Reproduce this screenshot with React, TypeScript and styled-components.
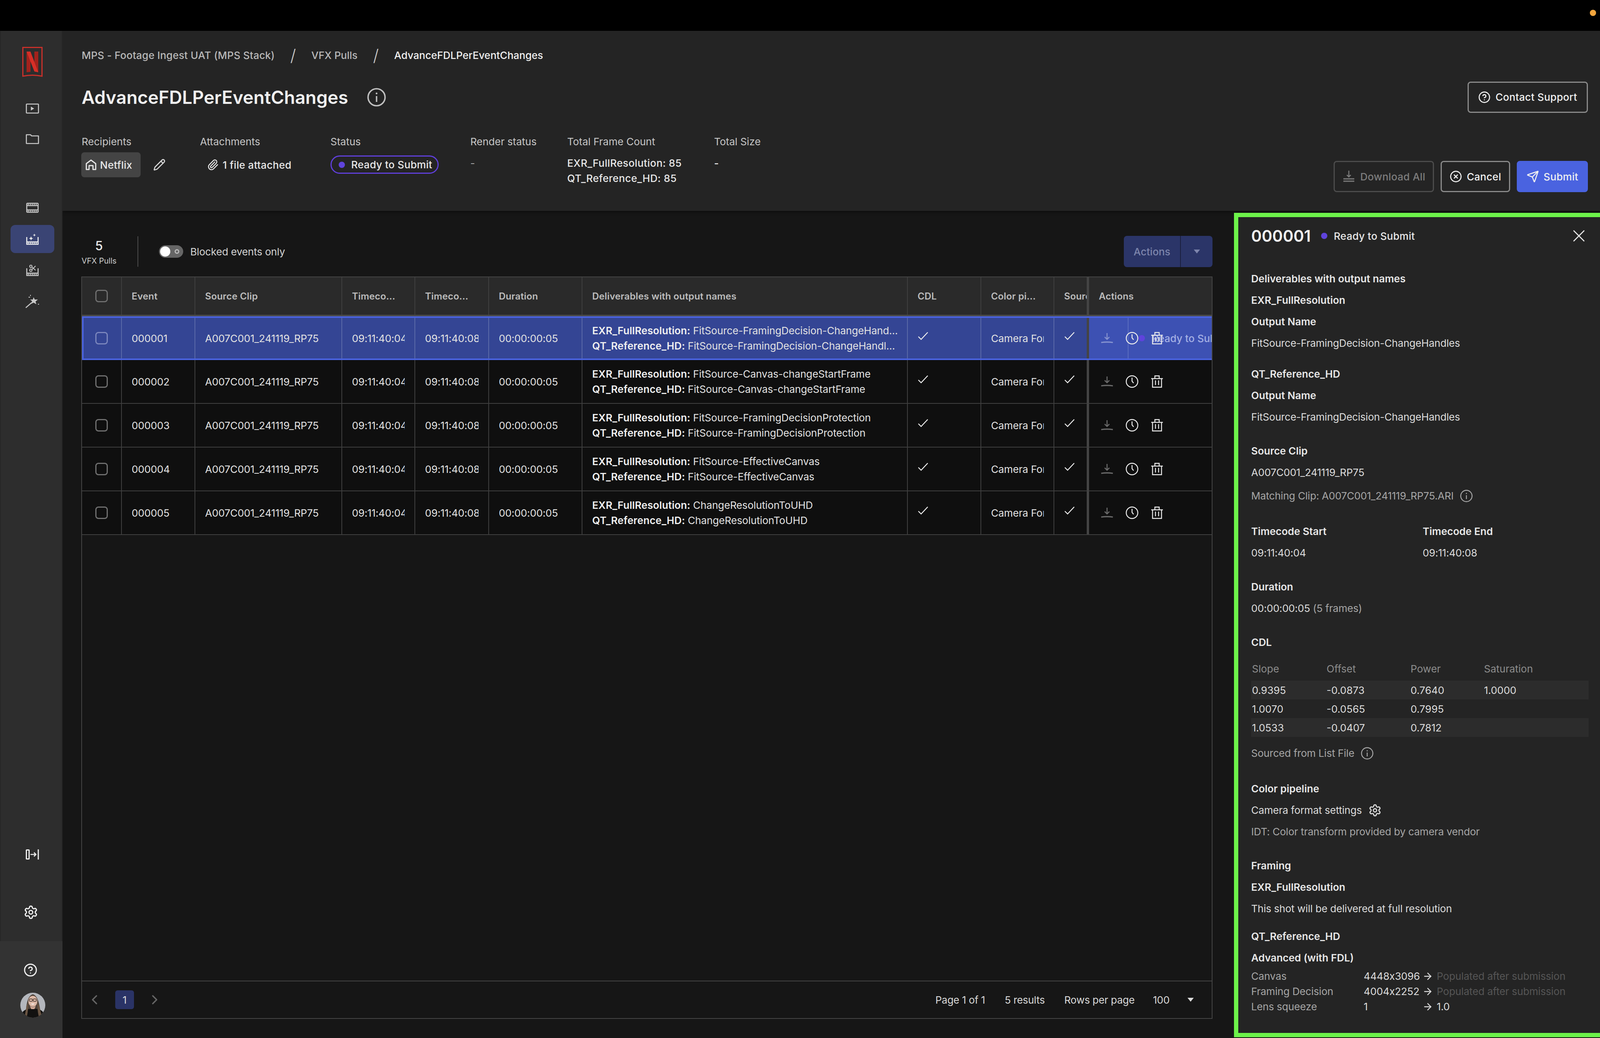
import styled, { createGlobalStyle } from 'styled-components';
import { ArrowRight, ChevronLeft, ChevronRight, CircleHelp, CircleX, Paperclip, Pencil, Send, Settings, X } from 'lucide-react';

const GlobalStyle = createGlobalStyle`
  * { box-sizing: border-box; }
  html, body { margin: 0; padding: 0; background: #000; }
  body {
    font-family: Inter, "Noto Sans", "Liberation Sans", sans-serif;
    font-size: 26px;
    color: #e6e6e6;
  }
`;

const COLUMNS = '102px 188px 376px 187px 189px 239px 833px 188px 187px 83px 320px';

const rows = [
  { id: '000001', exr: 'FitSource-FramingDecision-ChangeHandles', qt: 'FitSource-FramingDecision-ChangeHandles', selected: true },
  { id: '000002', exr: 'FitSource-Canvas-changeStartFrame', qt: 'FitSource-Canvas-changeStartFrame' },
  { id: '000003', exr: 'FitSource-FramingDecisionProtection', qt: 'FitSource-FramingDecisionProtection' },
  { id: '000004', exr: 'FitSource-EffectiveCanvas', qt: 'FitSource-EffectiveCanvas' },
  { id: '000005', exr: 'ChangeResolutionToUHD', qt: 'ChangeResolutionToUHD' },
];

function NetflixLogo() {
  return (
    <svg width="52" height="77" viewBox="0 0 52 77">
      <path d="M1.5 1.5H50.5V75C34 71.500 18 71.500 1.500 75Z" fill="none" stroke="#c8302a" strokeWidth="3" />
      <path d="M11 12H21V64L11 65Z" fill="#a3221c" />
      <path d="M31 12H41V65L31 63Z" fill="#a3221c" />
      <path d="M11 12H21L41 65L31 63Z" fill="#d62f27" />
    </svg>
  );
}

function PlayIcon() {
  return (
    <svg width="34" height="26" viewBox="0 0 34 26" fill="none" stroke="currentColor" strokeWidth="2.600">
      <rect x="1.500" y="1.500" width="31" height="23" rx="1.500" />
      <path d="M13 8L21.500 13L13 18Z" fill="currentColor" stroke="none" />
    </svg>
  );
}

function FolderIcon() {
  return (
    <svg width="34" height="26" viewBox="0 0 34 26" fill="none" stroke="currentColor" strokeWidth="2.600">
      <path d="M1.500 24V2H12L15 5H32.500V24.500H2Z" strokeLinejoin="round" />
    </svg>
  );
}

function FilmIcon() {
  return (
    <svg width="32" height="26" viewBox="0 0 32 26" fill="none" stroke="currentColor" strokeWidth="2.600">
      <rect x="1.500" y="1.500" width="29" height="23" rx="2" />
      <path d="M2 7.500H30M2 18.500H30" />
      <path d="M4 4.500H28M4 21.500H28" strokeWidth="2.500" strokeDasharray="3 2" />
    </svg>
  );
}

function ClapperSparkIcon() {
  return (
    <svg width="32" height="30" viewBox="0 0 32 30" fill="none" stroke="currentColor" strokeWidth="2.600">
      <path d="M1.500 10V28.500H30.500V10" />
      <path d="M2 22.500H30" />
      <path d="M4 25.500H28" strokeWidth="2.500" strokeDasharray="3 2" />
      <path d="M12.500 8L14 12L18 13.500L14 15L12.500 19L11 15L7 13.500L11 12Z" fill="currentColor" stroke="none" />
      <path d="M21 1L22 4L25 5L22 6L21 9L20 6L17 5L20 4Z" fill="currentColor" stroke="none" />
    </svg>
  );
}

function ClapperCutIcon() {
  return (
    <svg width="32" height="30" viewBox="0 0 32 30" fill="none" stroke="currentColor" strokeWidth="2.600">
      <path d="M1.500 10V28.500H30.500V10" />
      <path d="M2 22.500H30" />
      <path d="M4 25.500H28" strokeWidth="2.500" strokeDasharray="3 2" />
      <circle cx="12" cy="5" r="3" strokeWidth="2" />
      <circle cx="12" cy="15" r="3" strokeWidth="2" />
      <path d="M14.500 6.500L24 15M14.500 13.500L24 4" strokeWidth="2" />
    </svg>
  );
}

function WandIcon() {
  return (
    <svg width="36" height="36" viewBox="0 0 36 36" fill="currentColor">
      <path d="M1 34L16 21" fill="none" stroke="currentColor" strokeWidth="2.600" />
      <path d="M21 7L24 13L32 13L26 18L28 25L21 21L15 24L17 17L12 13L19 13Z" />
      <rect x="8" y="6" width="4" height="2" />
      <rect x="12" y="1" width="2" height="3" />
      <rect x="32" y="24" width="3" height="2" />
    </svg>
  );
}

function CollapseIcon() {
  return (
    <svg width="34" height="26" viewBox="0 0 34 26" fill="none" stroke="currentColor" strokeWidth="3">
      <rect x="1.500" y="1.500" width="7" height="23" rx="1" />
      <path d="M32 0V26" />
      <path d="M12 13H26M21 8L26 13L21 18" strokeWidth="2.600" />
    </svg>
  );
}

function InfoIcon({ size = 32 }: { size?: number }) {
  return (
    <svg width={size} height={size} viewBox="0 0 32 32" fill="none" stroke="currentColor" strokeWidth="2.400">
      <circle cx="16" cy="16" r="14.500" />
      <path d="M16 14V24" />
      <circle cx="16" cy="9.500" r="1.500" fill="currentColor" stroke="none" />
    </svg>
  );
}

function HouseIcon() {
  return (
    <svg width="30" height="30" viewBox="0 0 30 30" fill="none" stroke="currentColor" strokeWidth="3" strokeLinejoin="round">
      <path d="M3 27V12L15 3L27 12V27H20V17H10V27Z" />
    </svg>
  );
}

function DownloadIcon() {
  return (
    <svg width="32" height="28" viewBox="0 0 32 28" fill="none" stroke="currentColor" strokeWidth="2.600">
      <path d="M16 1V16M10 11L16 17L22 11" />
      <path d="M1 25C11 23.500 21 23.500 31 25" strokeWidth="3" />
    </svg>
  );
}

function DownloadAllIcon() {
  return (
    <svg width="34" height="34" viewBox="0 0 34 34" fill="none" stroke="currentColor" strokeWidth="2.600">
      <path d="M17 2V17M12 13L17 18L22 13" />
      <path d="M3 23H31M3 29H31" strokeWidth="2.800" />
    </svg>
  );
}

function ClockIcon() {
  return (
    <svg width="32" height="32" viewBox="0 0 32 32" fill="none" stroke="currentColor" strokeWidth="2.400">
      <circle cx="16" cy="16" r="14.800" />
      <path d="M16 6V15L20 20" />
    </svg>
  );
}

function TrashIcon() {
  return (
    <svg width="32" height="32" viewBox="0 0 32 32" fill="none" stroke="currentColor" strokeWidth="2.400">
      <path d="M1 8.500H31" />
      <path d="M10.500 8V1.500H21.500V8" />
      <path d="M4.500 9V30.500H27.500V9" />
      <path d="M12 13V25M20 13V25" />
    </svg>
  );
}

function CheckIcon() {
  return (
    <svg width="28" height="24" viewBox="0 0 28 24" fill="none" stroke="currentColor" strokeWidth="2.400">
      <path d="M2 13L9 20L26 2" />
    </svg>
  );
}

function Caret({ color = '#ddd' }: { color?: string }) {
  return (
    <svg width="16" height="10" viewBox="0 0 16 10">
      <path d="M0 0H16L8 10Z" fill={color} />
    </svg>
  );
}

function Avatar() {
  return (
    <svg width="64" height="64" viewBox="0 0 64 64">
      <defs>
        <clipPath id="avatar-clip">
          <circle cx="32" cy="32" r="32" />
        </clipPath>
      </defs>
      <g clipPath="url(#avatar-clip)">
        <rect width="64" height="64" fill="#b4b7bd" />
        <path d="M14 64C14 40 16 8 32 4C48 8 50 40 54 64Z" fill="#4c4038" />
        <path d="M0 64C4 44 16 40 32 42C48 40 60 44 64 64Z" fill="#121110" />
        <path d="M17 60C20 48 20 36 21 24L16 34L12 56ZM47 60C44 48 44 36 43 24L48 34L54 56Z" fill="#6a5543" />
        <ellipse cx="32" cy="22" rx="11.500" ry="14" fill="#dcb8a6" />
        <path d="M24 33C28 38 36 38 40 33L36 42H28Z" fill="#d0a794" />
        <rect x="23" y="16" width="8" height="6" rx="2" fill="none" stroke="#3a2c26" strokeWidth="1.400" />
        <rect x="33" y="16" width="8" height="6" rx="2" fill="none" stroke="#3a2c26" strokeWidth="1.400" />
        <path d="M27 28C30 31 34 31 37 28Z" fill="#fff" />
      </g>
    </svg>
  );
}

function App() {
  return (
    <>
      <GlobalStyle />
      <Page>
        <TopBar>
          <StatusDot />
        </TopBar>
        <Body>
          <Sidebar>
            <SideTop>
              <LogoBox>
                <NetflixLogo />
              </LogoBox>
              <NavGroup $top={45} $gap={6}>
                <NavItem><PlayIcon /></NavItem>
                <NavItem><FolderIcon /></NavItem>
              </NavGroup>
              <NavGroup $top={104} $gap={8}>
                <NavItem><FilmIcon /></NavItem>
                <NavItem $active><ClapperSparkIcon /></NavItem>
                <NavItem><ClapperCutIcon /></NavItem>
                <NavItem><WandIcon /></NavItem>
              </NavGroup>
              <SideBottomTools>
                <NavItem $bright><CollapseIcon /></NavItem>
                <NavItem $bright $shift={-4}><Settings size={38} strokeWidth={1.900} /></NavItem>
              </SideBottomTools>
            </SideTop>
            <SideFoot>
              <NavItem $bright $shift={-4}><CircleHelp size={36} strokeWidth={2} /></NavItem>
              <AvatarBox><Avatar /></AvatarBox>
            </SideFoot>
          </Sidebar>

          <Main>
            <Header>
              <Breadcrumb>
                <CrumbRoot>MPS - Footage Ingest UAT (MPS Stack)</CrumbRoot>
                <Slash>/</Slash>
                <span>VFX Pulls</span>
                <Slash>/</Slash>
                <CrumbCurrent>AdvanceFDLPerEventChanges</CrumbCurrent>
              </Breadcrumb>
              <TitleRow>
                <TitleGroup>
                  <Title>AdvanceFDLPerEventChanges</Title>
                  <TitleInfo><InfoIcon size={48} /></TitleInfo>
                </TitleGroup>
                <Button $width={308}>
                  <CircleHelp size={32} strokeWidth={2} />
                  Contact Support
                </Button>
              </TitleRow>
              <MetaRow>
                <MetaGrid>
                  <MetaCol>
                    <MetaLabel>Recipients</MetaLabel>
                    <ChipRow>
                      <Chip>
                        <HouseIcon />
                        Netflix
                      </Chip>
                      <Pencil size={32} strokeWidth={2} />
                    </ChipRow>
                  </MetaCol>
                  <MetaCol>
                    <MetaLabel>Attachments</MetaLabel>
                    <AttachRow>
                      <Paperclip size={30} strokeWidth={2} />
                      1 file attached
                    </AttachRow>
                  </MetaCol>
                  <MetaCol>
                    <MetaLabel>Status</MetaLabel>
                    <StatusPill>
                      <PurpleDot />
                      Ready to Submit
                    </StatusPill>
                  </MetaCol>
                  <MetaCol>
                    <MetaLabel>Render status</MetaLabel>
                    <MetaDash>-</MetaDash>
                  </MetaCol>
                  <MetaCol>
                    <MetaLabel>Total Frame Count</MetaLabel>
                    <MetaValue>EXR_FullResolution: 85</MetaValue>
                    <MetaValue>QT_Reference_HD: 85</MetaValue>
                  </MetaCol>
                  <MetaCol>
                    <MetaLabel>Total Size</MetaLabel>
                    <MetaValue>-</MetaValue>
                  </MetaCol>
                </MetaGrid>
                <ButtonRow>
                  <Button $width={257} $disabled>
                    <DownloadAllIcon />
                    Download All
                  </Button>
                  <Button $width={178}>
                    <CircleX size={32} strokeWidth={2} />
                    Cancel
                  </Button>
                  <Button $width={182} $primary>
                    <Send size={32} strokeWidth={2} />
                    Submit
                  </Button>
                </ButtonRow>
              </MetaRow>
            </Header>

            <Content>
              <ListArea>
                <Toolbar>
                  <ToolbarLeft>
                    <CountBlock>
                      <CountValue>5</CountValue>
                      <CountLabel>VFX Pulls</CountLabel>
                    </CountBlock>
                    <ToolbarDivider />
                    <Toggle>
                      <ToggleKnob />
                      <ToggleRing />
                    </Toggle>
                    <ToggleLabel>Blocked events only</ToggleLabel>
                  </ToolbarLeft>
                  <SplitButton>
                    <SplitMain>Actions</SplitMain>
                    <SplitCaret><Caret color="#7d85ac" /></SplitCaret>
                  </SplitButton>
                </Toolbar>

                <Table>
                  <HeadRow>
                    <HeadCell $center><CheckBox /></HeadCell>
                    <HeadCell>Event</HeadCell>
                    <HeadCell>Source Clip</HeadCell>
                    <HeadCell>Timeco...</HeadCell>
                    <HeadCell>Timeco...</HeadCell>
                    <HeadCell>Duration</HeadCell>
                    <HeadCell>Deliverables with output names</HeadCell>
                    <HeadCell>CDL</HeadCell>
                    <HeadCell>Color pi...</HeadCell>
                    <HeadCell $clip>Source</HeadCell>
                    <ActionsHead>Actions</ActionsHead>
                  </HeadRow>
                  {rows.map((row) => (
                    <Row key={row.id} $selected={row.selected}>
                      <Cell $center $first={row.selected} $selected={row.selected}><CheckBox $dim={row.selected} /></Cell>
                      <Cell $selected={row.selected}><Clip>{row.id}</Clip></Cell>
                      <Cell $selected={row.selected}><Clip>A007C001_241119_RP75</Clip></Cell>
                      <Cell $selected={row.selected}><Clip>09:11:40:04</Clip></Cell>
                      <Cell $selected={row.selected}><Clip>09:11:40:08</Clip></Cell>
                      <Cell $selected={row.selected}><Clip>00:00:00:05</Clip></Cell>
                      <Cell $selected={row.selected}>
                        <Deliverables>
                          <DeliverableLine><b>EXR_FullResolution:</b> {row.exr}</DeliverableLine>
                          <DeliverableLine><b>QT_Reference_HD:</b> {row.qt}</DeliverableLine>
                        </Deliverables>
                      </Cell>
                      <Cell $selected={row.selected}><CheckWrap><CheckIcon /></CheckWrap></Cell>
                      <Cell $selected={row.selected}><Clip>Camera Format</Clip></Cell>
                      <Cell $selected={row.selected} $noLine><CheckWrap><CheckIcon /></CheckWrap></Cell>
                      <ActionsCell $selected={row.selected}>
                        <ActionIcon $dim><DownloadIcon /></ActionIcon>
                        <ActionIcon><ClockIcon /></ActionIcon>
                        <ActionIcon><TrashIcon /></ActionIcon>
                        {row.selected ? (
                          <RowStatus>
                            <PurpleDot />
                            Ready to Submit
                          </RowStatus>
                        ) : null}
                      </ActionsCell>
                    </Row>
                  ))}
                  <TableFill />
                  <TableFoot>
                    <Pager>
                      <PagerArrow><ChevronLeft size={40} strokeWidth={2} /></PagerArrow>
                      <PageNumber>1</PageNumber>
                      <PagerArrow><ChevronRight size={40} strokeWidth={2} /></PagerArrow>
                    </Pager>
                    <FootInfo>
                      <span>Page 1 of 1</span>
                      <span>5 results</span>
                      <span>Rows per page</span>
                      <RowsValue>100</RowsValue>
                      <Caret />
                    </FootInfo>
                  </TableFoot>
                </Table>
              </ListArea>

              <DetailPanel>
                <PanelHead>
                  <PanelId>000001</PanelId>
                  <PanelStatus>
                    <PurpleDot />
                    Ready to Submit
                  </PanelStatus>
                  <CloseBtn><X size={52} strokeWidth={1.200} /></CloseBtn>
                </PanelHead>

                <Heading>Deliverables with output names</Heading>
                <Heading>EXR_FullResolution</Heading>
                <Heading>Output Name</Heading>
                <Line>FitSource-FramingDecision-ChangeHandles</Line>

                <Heading $top={24}>QT_Reference_HD</Heading>
                <Heading>Output Name</Heading>
                <Line>FitSource-FramingDecision-ChangeHandles</Line>

                <Heading $top={32}>Source Clip</Heading>
                <Line>A007C001_241119_RP75</Line>
                <Line $top={5} $muted>
                  Matching Clip: A007C001_241119_RP75.ARI
                  <InlineIcon><InfoIcon /></InlineIcon>
                </Line>

                <TimecodeGrid>
                  <div>
                    <Heading>Timecode Start</Heading>
                    <Line>09:11:40:04</Line>
                  </div>
                  <div>
                    <Heading>Timecode End</Heading>
                    <Line>09:11:40:08</Line>
                  </div>
                </TimecodeGrid>

                <Heading $top={32}>Duration</Heading>
                <Line>00:00:00:05 <Frames>(5 frames)</Frames></Line>

                <Heading $top={32}>CDL</Heading>
                <CdlHead>
                  <span>Slope</span>
                  <span>Offset</span>
                  <span>Power</span>
                  <span>Saturation</span>
                </CdlHead>
                <CdlRow $band>
                  <span>0.9395</span>
                  <span>-0.0873</span>
                  <span>0.7640</span>
                  <span>1.0000</span>
                </CdlRow>
                <CdlRow>
                  <span>1.0070</span>
                  <span>-0.0565</span>
                  <span>0.7995</span>
                </CdlRow>
                <CdlRow $band>
                  <span>1.0533</span>
                  <span>-0.0407</span>
                  <span>0.7812</span>
                </CdlRow>
                <Line $top={14} $muted>
                  Sourced from List File
                  <InlineIcon><InfoIcon /></InlineIcon>
                </Line>

                <Heading $top={36}>Color pipeline</Heading>
                <Line>
                  Camera format settings
                  <InlineIcon><Settings size={34} strokeWidth={2} /></InlineIcon>
                </Line>
                <Line $muted>IDT: Color transform provided by camera vendor</Line>

                <Heading $top={32}>Framing</Heading>
                <Heading>EXR_FullResolution</Heading>
                <Line>This shot will be delivered at full resolution</Line>

                <Heading $top={16}>QT_Reference_HD</Heading>
                <Heading>Advanced (with FDL)</Heading>
                <FramingRow>
                  <FramingLabel>Canvas</FramingLabel>
                  <span>4448x3096</span>
                  <ArrowRight size={28} strokeWidth={2} />
                  <Pending>Populated after submission</Pending>
                </FramingRow>
                <FramingRow>
                  <FramingLabel>Framing Decision</FramingLabel>
                  <span>4004x2252</span>
                  <ArrowRight size={28} strokeWidth={2} />
                  <Pending>Populated after submission</Pending>
                </FramingRow>
                <FramingRow>
                  <FramingLabel>Lens squeeze</FramingLabel>
                  <span>1</span>
                  <ArrowRight size={28} strokeWidth={2} />
                  <span>1.0</span>
                </FramingRow>
              </DetailPanel>
            </Content>
          </Main>
        </Body>
      </Page>
    </>
  );
}

export default App;

const Page = styled.div`
  width: 4112px;
  height: 2658px;
  display: flex;
  flex-direction: column;
  overflow: hidden;
  background: #161616;
`;

const TopBar = styled.div`
  height: 79px;
  flex: none;
  background: #000;
  position: relative;
`;

const StatusDot = styled.span`
  position: absolute;
  left: 4070px;
  top: 25px;
  width: 16px;
  height: 16px;
  border-radius: 50%;
  background: #f4a63e;
`;

const Body = styled.div`
  flex: 1;
  display: flex;
  min-height: 0;
`;

const Sidebar = styled.nav`
  width: 160px;
  flex: none;
  display: flex;
  flex-direction: column;
  background: #2d2d2d;
  color: #c8c8c8;
  box-shadow: inset -2px 0 0 #262626;
  position: relative;
  z-index: 2;
`;

const SideTop = styled.div`
  flex: 1;
  display: flex;
  flex-direction: column;
  align-items: center;
  padding: 41px 0 38px 4px;
  border-left: 2px solid #262626;
`;

const LogoBox = styled.div`
  height: 77px;
  display: flex;
`;

const NavGroup = styled.div<{ $top: number; $gap: number }>`
  display: flex;
  flex-direction: column;
  margin-top: ${(p) => p.$top}px;
  gap: ${(p) => p.$gap}px;
`;

const NavItem = styled.div<{ $active?: boolean; $bright?: boolean; $shift?: number }>`
  width: 112px;
  height: 72px;
  display: flex;
  align-items: center;
  justify-content: center;
  border-radius: 12px;
  margin-left: ${(p) => p.$shift ?? 0}px;
  background: ${(p) => (p.$active ? '#3a4474' : 'transparent')};
  color: ${(p) => (p.$active || p.$bright ? '#f0f0f0' : '#c8c8c8')};
`;

const SideBottomTools = styled.div`
  margin-top: auto;
  display: flex;
  flex-direction: column;
  gap: 76px;
`;

const SideFoot = styled.div`
  height: 248px;
  flex: none;
  background: #333;
  display: flex;
  flex-direction: column;
  align-items: center;
  padding-top: 38px;
`;

const AvatarBox = styled.div`
  width: 64px;
  height: 64px;
  margin: 22px 0 0 8px;
`;

const Main = styled.div`
  flex: 1;
  min-width: 0;
  display: flex;
  flex-direction: column;
`;

const Header = styled.header`
  height: 461px;
  flex: none;
  padding: 40px 47px 48px 49px;
  background: #242424;
  box-shadow: 0 2px 8px rgba(0, 0, 0, 0.5);
  position: relative;
  z-index: 1;
`;

const Breadcrumb = styled.div`
  height: 44px;
  display: flex;
  align-items: center;
  font-size: 26px;
  font-weight: 500;
  color: #b9b9b9;
`;

const CrumbRoot = styled.span`
  letter-spacing: 0.2px;
`;

const Slash = styled.span`
  font-size: 42px;
  font-weight: 300;
  color: #c8c8c8;
  margin: 0 39.5px;
`;

const CrumbCurrent = styled.span`
  color: #f0f0f0;
`;

const TitleRow = styled.div`
  height: 79px;
  margin-top: 46px;
  display: flex;
  align-items: center;
  justify-content: space-between;
`;

const TitleGroup = styled.div`
  display: flex;
  align-items: center;
`;

const Title = styled.h1`
  margin: 0;
  font-size: 46px;
  font-weight: 600;
  color: #f0f0f0;
`;

const TitleInfo = styled.span`
  display: flex;
  margin-left: 49px;
  color: #c0c0c0;
`;

const Button = styled.div<{ $width: number; $primary?: boolean; $disabled?: boolean }>`
  width: ${(p) => p.$width}px;
  height: 80px;
  display: flex;
  align-items: center;
  justify-content: center;
  gap: 12px;
  border-radius: 8px;
  font-size: 26px;
  font-weight: 500;
  letter-spacing: 0.3px;
  border: 3px solid ${(p) => (p.$primary ? '#4a63e0' : p.$disabled ? '#4c4c4c' : '#8a8a8a')};
  background: ${(p) => (p.$primary ? '#4a63e0' : 'transparent')};
  color: ${(p) => (p.$disabled ? '#7c7c7c' : '#f0f0f0')};
`;

const MetaRow = styled.div`
  margin-top: 57px;
  display: flex;
  justify-content: space-between;
  align-items: flex-end;
`;

const MetaGrid = styled.div`
  display: grid;
  grid-template-columns: 303px 334px 358px 248px 376px 200px;
  height: 147px;
`;

const MetaCol = styled.div`
  display: flex;
  flex-direction: column;
`;

const MetaLabel = styled.div`
  height: 36px;
  line-height: 36px;
  font-size: 26px;
  color: #c6c6c6;
  margin-bottom: 17px;
`;

const ChipRow = styled.div`
  display: flex;
  align-items: center;
  gap: 32px;
  margin-top: -8px;
  color: #d8d8d8;
`;

const Chip = styled.div`
  height: 64px;
  width: 152px;
  margin-left: -1px;
  padding-left: 10px;
  display: flex;
  align-items: center;
  gap: 8px;
  background: #444;
  border-radius: 8px;
  font-weight: 500;
  letter-spacing: 0.3px;
  color: #e8e8e8;
`;

const AttachRow = styled.div`
  display: flex;
  align-items: center;
  gap: 10px;
  height: 64px;
  margin-top: -8px;
  padding-left: 18px;
  font-weight: 500;
  letter-spacing: 0.3px;
  color: #e8e8e8;
`;

const StatusPill = styled.div`
  width: 277px;
  height: 47px;
  display: flex;
  align-items: center;
  gap: 16px;
  padding-left: 18px;
  border: 3px solid #5f3fd9;
  border-radius: 24px;
  font-weight: 500;
  letter-spacing: 0.3px;
  color: #e8e8e8;
`;

const PurpleDot = styled.span`
  width: 16px;
  height: 16px;
  flex: none;
  border-radius: 50%;
  background: #5f43dc;
`;

const MetaDash = styled.div`
  height: 39px;
  line-height: 39px;
  color: #aaa;
`;

const MetaValue = styled.div`
  height: 39px;
  line-height: 39px;
  font-weight: 500;
  letter-spacing: 0.4px;
  color: #e8e8e8;
`;

const ButtonRow = styled.div`
  display: flex;
  gap: 17px;
`;

const Content = styled.div`
  flex: 1;
  min-height: 0;
  display: flex;
`;

const ListArea = styled.section`
  width: 2992px;
  flex: none;
  display: flex;
  flex-direction: column;
  padding: 64px 48px 49px;
`;

const Toolbar = styled.div`
  height: 80px;
  flex: none;
  margin-bottom: 24px;
  display: flex;
  align-items: center;
  justify-content: space-between;
`;

const ToolbarLeft = styled.div`
  display: flex;
  align-items: center;
`;

const CountBlock = styled.div`
  width: 91px;
  padding-top: 4px;
  display: flex;
  flex-direction: column;
  align-items: center;
`;

const CountValue = styled.div`
  font-size: 32px;
  font-weight: 500;
  line-height: 40px;
  color: #e8e8e8;
`;

const CountLabel = styled.div`
  font-size: 20px;
  line-height: 28px;
  margin-top: 4px;
  color: #cfcfcf;
  white-space: nowrap;
`;

const ToolbarDivider = styled.div`
  width: 2px;
  height: 78px;
  margin: 0 53px;
  background: #4c4c4c;
`;

const Toggle = styled.div`
  width: 62px;
  height: 32px;
  border-radius: 16px;
  background: #666;
  display: flex;
  align-items: center;
  justify-content: space-between;
  padding: 0 10px 0 3px;
`;

const ToggleKnob = styled.span`
  width: 26px;
  height: 26px;
  border-radius: 50%;
  background: #fff;
`;

const ToggleRing = styled.span`
  width: 12px;
  height: 12px;
  border-radius: 50%;
  border: 3px solid #bbb;
`;

const ToggleLabel = styled.span`
  margin-left: 18px;
  font-size: 26px;
  letter-spacing: -0.2px;
  color: #d4d4d4;
`;

const SplitButton = styled.div`
  width: 227px;
  height: 80px;
  display: flex;
  border-radius: 8px;
  overflow: hidden;
  background: #2b3568;
  color: #7d85ac;
  font-weight: 500;
`;

const SplitMain = styled.div`
  width: 146px;
  display: flex;
  align-items: center;
  justify-content: center;
  border-right: 2px solid #1a1f3d;
`;

const SplitCaret = styled.div`
  flex: 1;
  display: flex;
  align-items: center;
  justify-content: center;
`;

const Table = styled.div`
  flex: 1;
  min-height: 0;
  display: flex;
  flex-direction: column;
  border: 2px solid #444;
`;

const HeadRow = styled.div`
  display: grid;
  grid-template-columns: ${COLUMNS};
  height: 100px;
  flex: none;
  background: #2a2a2a;
  border-bottom: 4px solid #4a4a4a;
`;

const HeadCell = styled.div<{ $center?: boolean; $clip?: boolean }>`
  display: flex;
  align-items: center;
  justify-content: ${(p) => (p.$center ? 'center' : 'flex-start')};
  padding: 0 ${(p) => (p.$clip || p.$center ? 0 : 25)}px 0 ${(p) => (p.$center ? 0 : 25)}px;
  border-right: ${(p) => (p.$clip ? 'none' : '2px solid #3f3f3f')};
  font-size: 24px;
  font-weight: 600;
  letter-spacing: 0.15px;
  color: #bcbcbc;
  white-space: nowrap;
  overflow: hidden;
`;

const ActionsHead = styled(HeadCell)`
  border-right: none;
  border-left: 6px solid #444;
`;

const CheckBox = styled.span<{ $dim?: boolean }>`
  width: 32px;
  height: 32px;
  border-radius: 8px;
  border: 3px solid ${(p) => (p.$dim ? '#7b86bd' : '#6f6f6f')};
`;

const Row = styled.div<{ $selected?: boolean }>`
  display: grid;
  grid-template-columns: ${COLUMNS};
  height: 112px;
  flex: none;
  background: ${(p) => (p.$selected ? '#344594' : '#0f0f0f')};
  border-top: ${(p) => (p.$selected ? '4px solid #4a63e0' : 'none')};
  border-bottom: ${(p) => (p.$selected ? '4px solid #4a63e0' : '2px solid #3f3f3f')};
`;

const Cell = styled.div<{ $center?: boolean; $first?: boolean; $selected?: boolean; $noLine?: boolean }>`
  display: flex;
  align-items: center;
  min-width: 0;
  justify-content: ${(p) => (p.$center ? 'center' : 'flex-start')};
  padding: 0 ${(p) => (p.$center && p.$first ? 4 : p.$center ? 0 : 25)}px 0 ${(p) => (p.$center ? 0 : 25)}px;
  border-left: ${(p) => (p.$first ? '4px solid #4a63e0' : 'none')};
  border-right: ${(p) => (p.$noLine ? 'none' : `2px solid ${p.$selected ? '#5b6aa8' : '#3f3f3f'}`)};
  font-size: 26px;
  letter-spacing: -0.15px;
  color: #e2e2e2;
`;

const Clip = styled.span`
  display: block;
  white-space: nowrap;
  overflow: hidden;
`;

const Deliverables = styled.div`
  min-width: 0;
  flex: 1;
  margin-right: -4px;
`;

const DeliverableLine = styled.div`
  height: 39px;
  line-height: 39px;
  white-space: nowrap;
  overflow: hidden;
  text-overflow: ellipsis;
  color: #e2e2e2;

  & + & {
    padding-right: 4px;
  }

  b {
    font-weight: 600;
    letter-spacing: 0.1px;
    color: #f0f0f0;
  }
`;

const CheckWrap = styled.span`
  display: flex;
  color: #eee;
  margin-top: -10px;
`;

const ActionsCell = styled.div<{ $selected?: boolean }>`
  position: relative;
  display: flex;
  align-items: center;
  gap: 32px;
  padding-left: 30px;
  overflow: hidden;
  border-left: 6px solid #444;
  background: ${(p) => (p.$selected ? '#3d51b3' : 'transparent')};
`;

const ActionIcon = styled.span<{ $dim?: boolean }>`
  display: flex;
  position: relative;
  z-index: 1;
  color: ${(p) => (p.$dim ? 'rgba(255, 255, 255, 0.38)' : '#ececec')};
`;

const RowStatus = styled.div`
  position: absolute;
  left: 99px;
  top: 0;
  bottom: 0;
  display: flex;
  align-items: center;
  gap: 18px;
  padding-left: 26px;
  border-left: 2px solid #5b6dc0;
  white-space: nowrap;
  color: #a4afe4;
  font-weight: 500;
`;

const TableFill = styled.div`
  flex: 1;
  min-height: 0;
`;

const TableFoot = styled.div`
  height: 96px;
  flex: none;
  border-top: 2px solid #444;
  display: flex;
  align-items: center;
  justify-content: space-between;
  padding: 0 46px 0 12px;
`;

const Pager = styled.div`
  display: flex;
  align-items: center;
  gap: 10px;
  color: #666;
`;

const PagerArrow = styled.span`
  display: flex;
  width: 40px;
`;

const PageNumber = styled.div`
  width: 48px;
  height: 48px;
  margin: 0 23px;
  display: flex;
  align-items: center;
  justify-content: center;
  border-radius: 6px;
  background: #2a3366;
  color: #dcdcdc;
`;

const FootInfo = styled.div`
  display: flex;
  align-items: center;
  gap: 50px;
  font-size: 26px;
  letter-spacing: -0.3px;
  color: #d8d8d8;
`;

const RowsValue = styled.span`
  margin: 0 -4px 0 -3px;
`;

const DetailPanel = styled.aside`
  width: 953px;
  height: 2111px;
  margin: 5px 0 0 7px;
  flex: none;
  border: 11px solid #6df24a;
  background: #242424;
  padding: 0 0 0 33px;
  font-size: 26px;
  color: #dcdcdc;
  position: relative;
  z-index: 2;
`;

const PanelHead = styled.div`
  height: 96px;
  display: flex;
  align-items: center;
  margin-bottom: 34px;
`;

const PanelId = styled.div`
  font-size: 41px;
  font-weight: 600;
  color: #f0f0f0;
`;

const PanelStatus = styled.div`
  display: flex;
  align-items: center;
  gap: 17px;
  margin-left: 26px;
  font-weight: 500;
  letter-spacing: 0.3px;
  color: #e8e8e8;
`;

const CloseBtn = styled.span`
  display: flex;
  margin-left: auto;
  margin-right: 33px;
  color: #e8e8e8;
`;

const Line = styled.div<{ $top?: number; $muted?: boolean }>`
  height: 55px;
  line-height: 55px;
  margin-top: ${(p) => p.$top ?? 0}px;
  display: flex;
  align-items: center;
  white-space: pre-wrap;
  letter-spacing: -0.2px;
  color: ${(p) => (p.$muted ? '#a6a6a6' : '#dcdcdc')};
`;

const Heading = styled(Line)`
  font-weight: 600;
  letter-spacing: 0;
  color: #e8e8e8;
`;

const Frames = styled.span`
  color: #a6a6a6;
`;

const InlineIcon = styled.span`
  display: flex;
  margin-left: 17px;
`;

const TimecodeGrid = styled.div`
  display: grid;
  grid-template-columns: 439px 1fr;
  margin-top: 36px;
`;

const CdlHead = styled.div`
  width: 864px;
  height: 48px;
  margin: 16px 0 7px;
  padding-left: 2px;
  display: grid;
  grid-template-columns: 191px 215px 188px 1fr;
  align-items: center;
  color: #8c8c8c;
`;

const CdlRow = styled.div<{ $band?: boolean }>`
  width: 864px;
  height: 48px;
  padding-left: 2px;
  display: grid;
  grid-template-columns: 191px 215px 188px 1fr;
  align-items: center;
  background: ${(p) => (p.$band ? '#2c2c2c' : 'transparent')};
  color: #dcdcdc;
`;

const FramingRow = styled.div`
  height: 39px;
  display: grid;
  grid-template-columns: 288px 150px 37px 1fr;
  align-items: center;
  font-feature-settings: 'calt' 0;
  letter-spacing: -0.15px;
  color: #dcdcdc;
`;

const FramingLabel = styled.span`
  color: #a6a6a6;
`;

const Pending = styled.span`
  color: #555;
`;
